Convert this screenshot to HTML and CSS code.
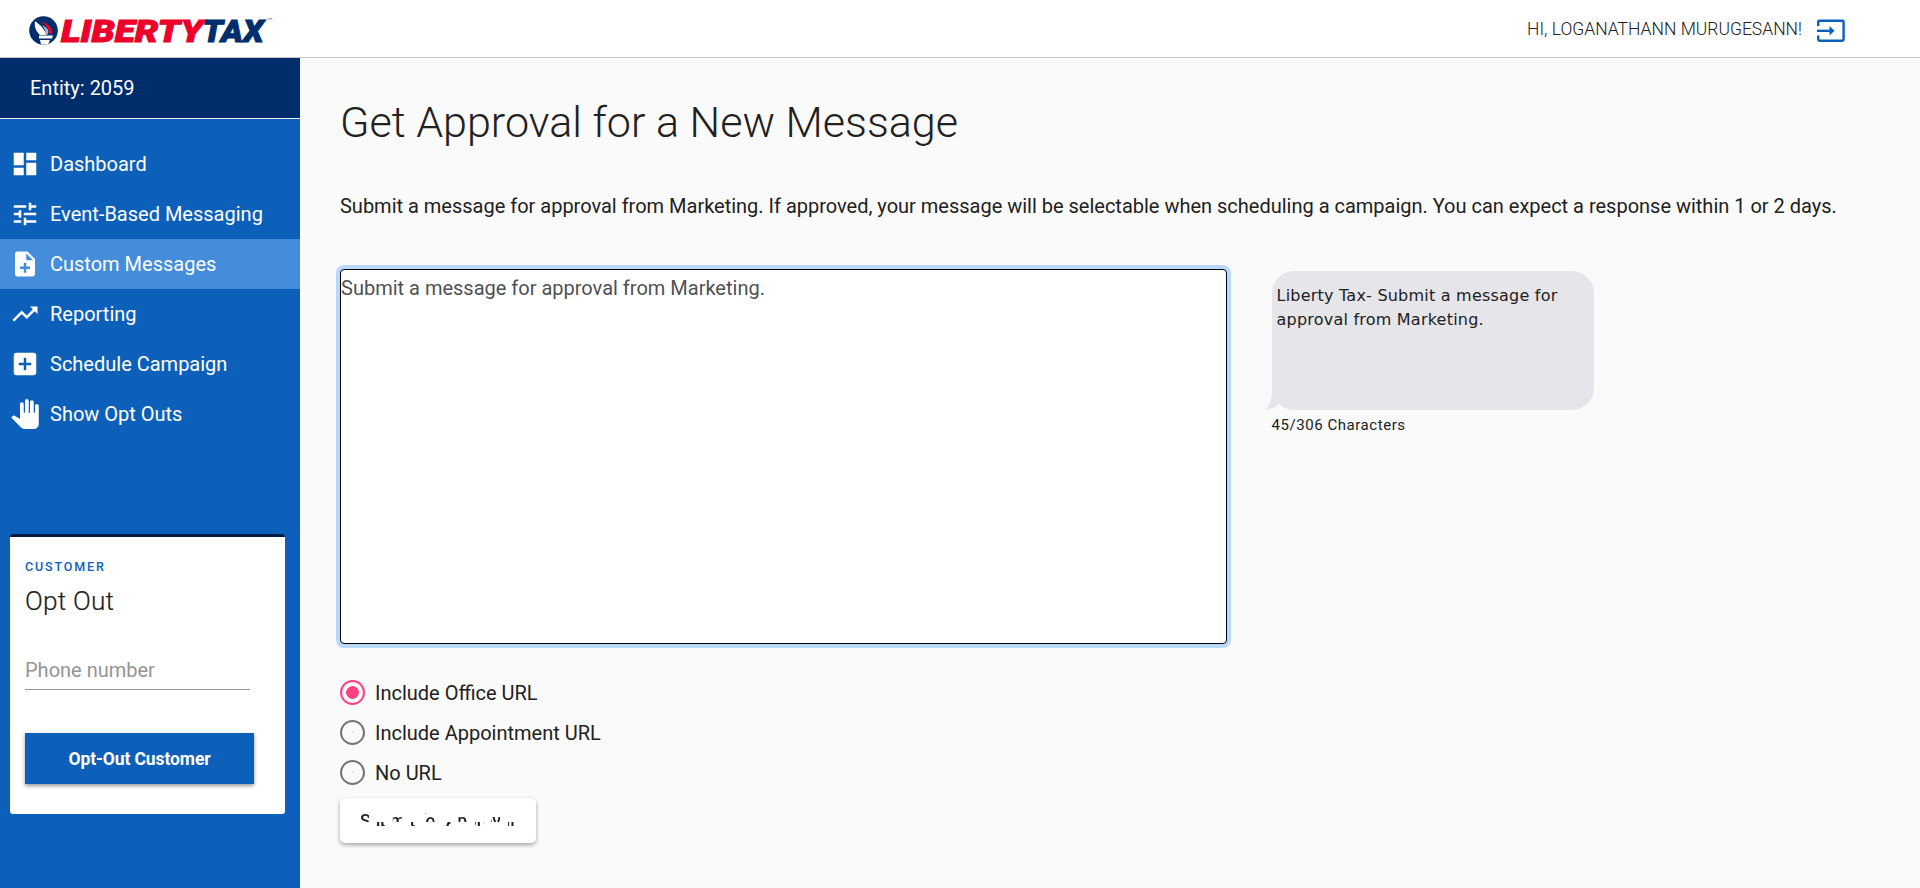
FILE: index.html
```html
<!DOCTYPE html>
<html lang="en">
<head>
<meta charset="utf-8">
<title>Get Approval for a New Message</title>
<link rel="stylesheet" href="styles.css">
</head>
<body>
<header class="topbar">
  <svg class="logo" width="255" height="42" viewBox="0 -5 255 42" aria-label="Liberty Tax">
    <circle cx="15.5" cy="14.5" r="14.3" fill="#002d6c"/>
    <path d="M7 5C6 11 8 15 12 19H18C18 15 15 13 13 10C11 8 9 7 7 5Z" fill="#fff"/>
    <path d="M13 6C19 7 25 11 24.500 17L21 19C22 13 18 9 13 6Z" fill="#ed0029"/>
    <path d="M14 9C20 12 22 15 19 19H17C19 15 16 12 14 9Z" fill="#b9bcc2"/>
    <path d="M11 19.500H25L24 22.500H11ZM12 24H22L20 28.500H13Z" fill="#fff"/>
    <text class="logo-text" x="33" y="25.700" textLength="142" lengthAdjust="spacingAndGlyphs" fill="#ed0029" stroke="#ed0029">LIBERTY</text>
    <text class="logo-text" x="174.500" y="25.700" textLength="61" lengthAdjust="spacingAndGlyphs" fill="#002d6c" stroke="#002d6c">TAX</text>
    <text class="logo-mark" x="238.500" y="7" fill="#5c6d8f">™</text>
  </svg>
  <div class="user">
    <span class="greeting">HI, LOGANATHANN MURUGESANN!</span>
    <svg class="exit" width="30" height="24" viewBox="0 0 30 24" fill="none" stroke="#0d60ba" stroke-width="2.400">
      <path d="M2.200 7V3Q2.200 1.800 3.400 1.800H26.400Q27.600 1.800 27.600 3V20.500Q27.600 21.700 26.400 21.700H3.400Q2.200 21.700 2.200 20.500V16.500"/>
      <path d="M1 11.800H14"/><path d="M13.500 7L18.500 11.800L13.500 16.500Z" fill="#0d60ba" stroke="none"/>
    </svg>
  </div>
</header>
<div class="shell">
  <aside class="sidebar">
    <div class="entity">Entity: 2059</div>
    <nav class="nav">
      <a class="nav-item"><svg viewBox="0 0 24 24"><path d="M3 13h8V3H3v10zm0 8h8v-6H3v6zm10 0h8V11h-8v10zm0-18v6h8V3h-8z"/></svg>Dashboard</a>
      <a class="nav-item"><svg viewBox="0 0 24 24"><path d="M3 17v2h6v-2H3zM3 5v2h10V5H3zm10 16v-2h8v-2h-8v-2h-2v6h2zM7 9v2H3v2h4v2h2V9H7zm14 4v-2H11v2h10zm-6-4h2V7h4V5h-4V3h-2v6z"/></svg>Event-Based Messaging</a>
      <a class="nav-item active"><svg viewBox="0 0 24 24"><path d="M14 2H6c-1.100 0-1.990.9-1.990 2L4 20c0 1.100.89 2 1.990 2H18c1.100 0 2-.9 2-2V8l-6-6zm2 14h-3v3h-2v-3H8v-2h3v-3h2v3h3v2zm-3-7V3.500L18.500 9H13z"/></svg>Custom Messages</a>
      <a class="nav-item"><svg viewBox="0 0 24 24"><path d="M16 6l2.290 2.290-4.880 4.880-4-4L2 16.590 3.410 18l6-6 4 4 6.300-6.290L22 12V6z"/></svg>Reporting</a>
      <a class="nav-item"><svg viewBox="0 0 24 24"><path d="M19 3H5c-1.110 0-2 .9-2 2v14c0 1.100.89 2 2 2h14c1.100 0 2-.9 2-2V5c0-1.100-.9-2-2-2zm-2 10h-4v4h-2v-4H7v-2h4V7h2v4h4v2z"/></svg>Schedule Campaign</a>
      <a class="nav-item"><svg viewBox="0 0 24 24"><path d="M23 5.500V20c0 2.200-1.800 4-4 4h-7.300c-1.080 0-2.100-.43-2.850-1.190L1 14.830s1.260-1.230 1.300-1.250c.22-.19.490-.29.790-.29.220 0 .42.060.6.160.04.010 4.310 2.460 4.310 2.460V4c0-.83.670-1.500 1.500-1.500S11 3.170 11 4v7h1V1.500c0-.83.670-1.500 1.500-1.500S15 .67 15 1.500V11h1V2.500c0-.83.670-1.500 1.500-1.500s1.500.67 1.500 1.500V11h1V5.500c0-.83.670-1.500 1.500-1.500s1.500.67 1.500 1.500z"/></svg>Show Opt Outs</a>
    </nav>
    <section class="card">
      <div class="eyebrow">CUSTOMER</div>
      <h2 class="card-title">Opt Out</h2>
      <div class="phone">Phone number</div>
      <button class="opt-button">Opt-Out Customer</button>
    </section>
  </aside>
  <main class="content">
    <h1 class="title">Get Approval for a New Message</h1>
    <p class="intro">Submit a message for approval from Marketing. If approved, your message will be selectable when scheduling a campaign. You can expect a response within 1 or 2 days.</p>
    <div class="compose">
      <div class="editor">Submit a message for approval from Marketing.</div>
      <div class="preview">
        <div class="bubble">Liberty Tax- Submit a message for approval from Marketing.
          <svg class="tail" width="20" height="27" viewBox="0 0 20 27"><path d="M7 0V8C7 17 4 23 0 26.500C6 27 11 24 14 21L20 0Z" fill="#e5e5ea"/></svg>
        </div>
        <div class="count">45/306 Characters</div>
      </div>
    </div>
    <div class="options">
      <label class="option"><span class="radio checked"></span><span class="option-label">Include Office URL</span></label>
      <label class="option"><span class="radio"></span><span class="option-label">Include Appointment URL</span></label>
      <label class="option"><span class="radio"></span><span class="option-label">No URL</span></label>
    </div>
    <button class="submit"><span class="submit-label">Submit for Approval</span></button>
  </main>
</div>
</body>
</html>
```
FILE: styles.css
```css
* { box-sizing: border-box; }
body { margin: 0; height: 888px; overflow: hidden; display: flex; flex-direction: column; background: #fafafa; color: #212121; font-family: Roboto, sans-serif; font-size: 20px; }
button { font-family: inherit; border: 0; }
.topbar { height: 58px; flex: none; display: flex; justify-content: space-between; align-items: flex-start; padding: 11px 74px 0 28px; background: #fff; border-bottom: 1px solid #c8c8c8; }
.logo { overflow: visible; }
.logo-text { font: italic 900 31px Roboto, sans-serif; stroke-width: 1px; }
.logo-mark { font: 7px "DejaVu Sans", sans-serif; }
.user { display: flex; gap: 14px; padding-top: 5px; }
.greeting { font-size: 17.5px; font-weight: 300; line-height: 26px; white-space: nowrap; }
.exit { margin-top: 3px; }
.shell { flex: 1; display: flex; min-height: 0; }
.sidebar { width: 300px; flex: none; background: #0d60ba; display: flex; flex-direction: column; color: #fff; }
.entity { height: 61px; flex: none; padding-left: 30px; line-height: 60px; background: #002d6c; border-bottom: 1px solid #fff; }
.nav { padding-top: 20px; }
.nav-item { height: 50px; display: flex; align-items: center; gap: 10px; padding-left: 10px; white-space: nowrap; }
.nav-item svg { width: 30px; height: 30px; fill: #fff; }
.active { background: #448ddb; }
.card { margin: 95px 15px 0 10px; height: 280px; border-top: 3px solid #041e42; border-radius: 3px; background: #fff; padding: 20px 31px 0 15px; color: #212121; }
.eyebrow { color: #0d60ba; font-size: 12.500px; font-weight: 500; letter-spacing: 1.870px; line-height: 20px; }
.card-title { margin: 9px 0 0; font-size: 26.250px; font-weight: 300; line-height: 30px; letter-spacing: .2px; -webkit-text-stroke: .2px #212121; }
.phone { margin: 30px 5px 0 0; height: 44px; line-height: 49px; border-bottom: 1px solid #949494; color: #949494; width: 225px; }
.opt-button { display: block; margin-top: 43px; width: 229px; height: 51px; background: #0d60ba; color: #fff; font-size: 17.5px; font-weight: 700; letter-spacing: -.1px; box-shadow: 0 2px 4px rgba(0,0,0,.4); }
.content { flex: 1; padding: 38px 40px 0; min-width: 0; }
.title { margin: 0; font-size: 43.100px; font-weight: 300; line-height: 54px; }
.intro { margin: 41px 0 0; line-height: 30px; white-space: nowrap; letter-spacing: -.007px; }
.compose { display: flex; gap: 44.500px; margin-top: 48px; }
.editor { width: 887px; height: 375px; background: #fff; border: 1px solid #000; border-radius: 4px; box-shadow: 0 0 0 4px #b9d9fb; color: #4f5155; padding: 3px 0 0 0; line-height: 30px; }
.preview { padding-top: 2px; }
.bubble { position: relative; width: 322.500px; height: 139px; border-radius: 22px; background: #e5e5ea; padding: 13px 5px 0; font: 16px/24px "DejaVu Sans", sans-serif; letter-spacing: .22px; }
.tail { position: absolute; left: -7px; bottom: 0; }
.count { margin-top: 4px; font-size: 15px; letter-spacing: .55px; line-height: 22px; }
.options { margin-top: 28px; }
.option { display: flex; align-items: center; gap: 10px; height: 40px; }
.option-label { padding-top: 2px; }
.radio { width: 25px; height: 25px; border: 2px solid #757575; border-radius: 50%; background: radial-gradient(circle, #ff9fc0 .6px, transparent .8px); }
.checked { border-color: #ff4081; background: radial-gradient(circle, #ff4081 6px, transparent 6.600px); }
.submit { display: block; margin-top: 6px; width: 196px; height: 45px; padding: 0 20px; border-radius: 5px; background: #fff; color: #212121; font-size: 17.5px; font-weight: 500; text-align: left; box-shadow: 0 2px 4px rgba(0,0,0,.35); }
/* The label shows through two staggered rows of narrow cells */
.submit-label {
  display: block; height: 25px; line-height: 27px; white-space: nowrap; letter-spacing: -.08px;
  mask-image: linear-gradient(90deg, #000 8.500px, transparent 8.500px), linear-gradient(90deg, transparent 16.500px, #000 16.500px, #000 25px, transparent 25px);
  mask-size: 32.800px 14px, 32.800px 4px;
  mask-position: 0 0, 0 14px;
  mask-repeat: repeat-x;
}
```
